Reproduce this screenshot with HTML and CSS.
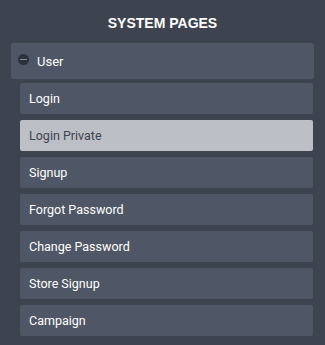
FILE: index.html
```html
<!DOCTYPE html>
<html lang="en">
<head>
    <meta charset="UTF-8">
    <meta name="viewport" content="width=device-width, initial-scale=1.0">
    <title>System Pages</title>
    <link rel="stylesheet" href="styles.css">
</head>
<body>
    <div class="panel">
        <h1 class="title">SYSTEM PAGES</h1>

        <div class="group">
            <span class="toggle"></span>
            <span>User</span>
        </div>

        <ul class="pages">
            <li class="page">Login</li>
            <li class="page active">Login Private</li>
            <li class="page">Signup</li>
            <li class="page">Forgot Password</li>
            <li class="page">Change Password</li>
            <li class="page">Store Signup</li>
            <li class="page">Campaign</li>
        </ul>
    </div>
</body>
</html>
```

FILE: styles.css
```css
/* General */
body {
    margin: 0;
    background-color: #3e4350;
    font-family: "Liberation Sans", Arial, sans-serif;
    color: #fff;
}

.panel {
    padding: 15px 11px 0 11px;
}

.title {
    margin: 0 0 11px 0;
    text-align: center;
    font-size: 14px;
    font-weight: bold;
    line-height: 17px;
    color: #fff;
}

/* Group header */
.group {
    display: flex;
    align-items: center;
    gap: 8px;
    height: 36px;
    padding: 0 7px;
    background-color: #4f5766;
    border-radius: 2px;
    font-family: Roboto, "Liberation Sans", sans-serif;
    font-size: 13px;
}

.toggle {
    position: relative;
    width: 11px;
    height: 11px;
    border-radius: 50%;
    background-color: #2d3139;
    margin-top: -4px;
}

.toggle::after {
    content: "";
    position: absolute;
    left: 2px;
    right: 2px;
    top: 5px;
    height: 1px;
    background-color: #8a909a;
}

/* Page list */
.pages {
    list-style: none;
    margin: 4px 1px 0 9px;
    padding: 0;
    display: flex;
    flex-direction: column;
    gap: 6px;
}

.page {
    height: 31px;
    line-height: 31px;
    padding: 0 9px;
    background-color: #4f5766;
    border-radius: 2px;
    font-family: Roboto, "Liberation Sans", sans-serif;
    font-size: 12.5px;
    color: #fff;
}

.page.active {
    background-color: #bcbfc6;
    color: #3e4350;
}
```
